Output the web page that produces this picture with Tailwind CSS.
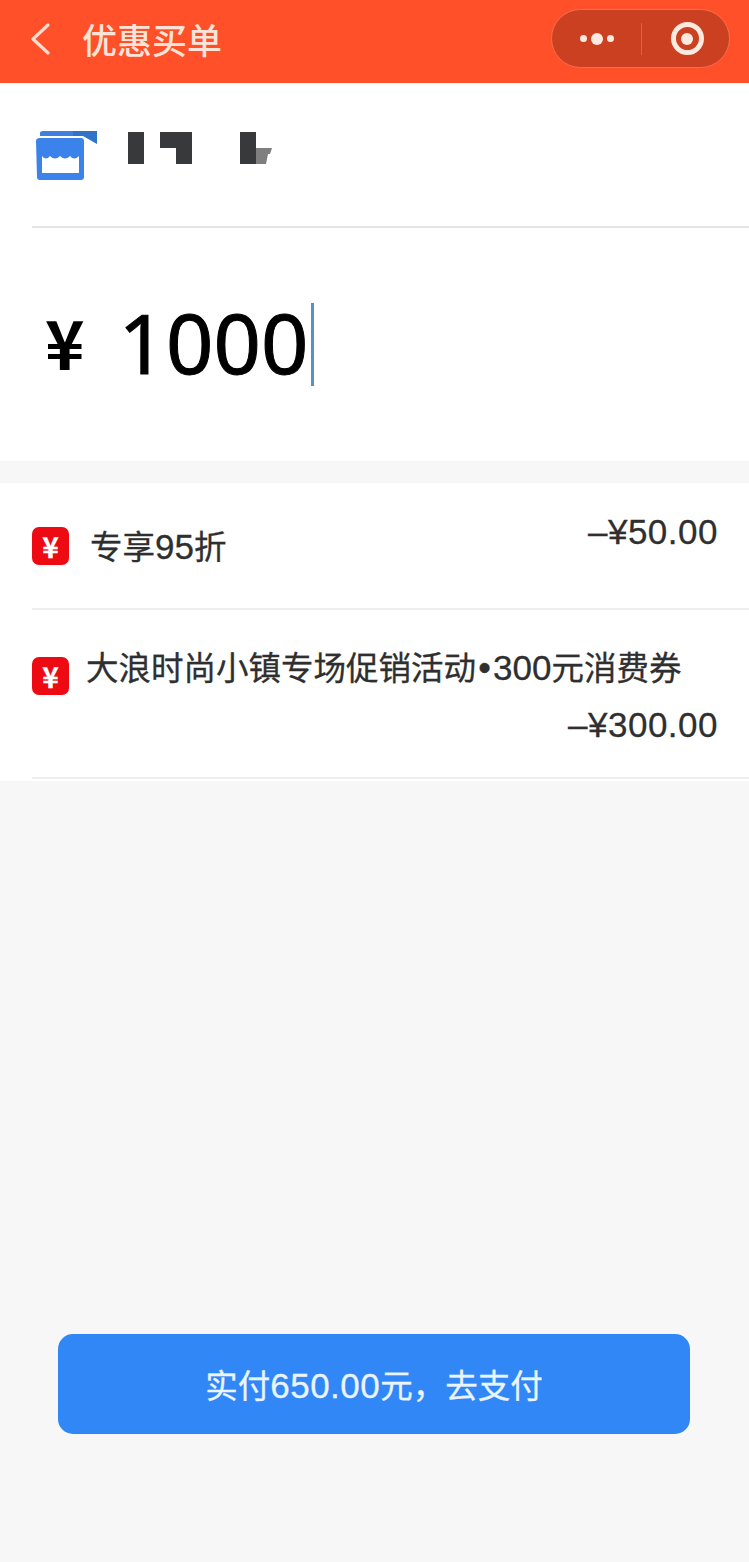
<!doctype html>
<html lang="zh-CN">
<head>
<meta charset="UTF-8">
<script src="https://cdn.jsdelivr.net/npm/@tailwindcss/browser@4"></script>
<title>优惠买单</title>
</head>
<body class="bg-[#f7f7f7] font-['Liberation_Sans','Noto_Sans_CJK_SC',sans-serif]">
<div class="w-[749px] h-[1562px] flex flex-col overflow-hidden">
  <!-- Header -->
  <header class="h-[83px] bg-[#ff5029] flex items-center pl-[31px] pr-[19px] pb-[6px] shrink-0">
    <svg class="w-[19px] h-[32px]" viewBox="0 0 19 32" fill="none" stroke="#fbdccf" stroke-width="3.2" stroke-linecap="round" stroke-linejoin="round"><path d="M17 2 L2 16 L17 30"/></svg>
    <h1 class="ml-[32px] text-[35px] leading-[44px] text-[#fbe3d8] font-medium font-['Noto_Sans_CJK_SC',sans-serif]">优惠买单</h1>
    <div class="ml-auto w-[179px] h-[59px] rounded-full bg-[#cb4021] border border-[#f4704f] flex items-center">
      <div class="w-[89px] flex items-center justify-center gap-[4px]">
        <span class="w-[7px] h-[7px] rounded-full bg-[#fde9df]"></span>
        <span class="w-[12px] h-[12px] rounded-full bg-[#fde9df]"></span>
        <span class="w-[7px] h-[7px] rounded-full bg-[#fde9df]"></span>
      </div>
      <div class="w-px h-[32px] bg-[#dc6243]"></div>
      <div class="flex-1 flex items-center justify-center pl-[3px]">
        <div class="w-[33px] h-[33px] rounded-full border-[5px] border-[#fdeadf] flex items-center justify-center">
          <span class="w-[12px] h-[12px] rounded-full bg-[#fdeadf]"></span>
        </div>
      </div>
    </div>
  </header>

  <!-- Shop and amount -->
  <section class="bg-white h-[378px] pl-[32px] shrink-0 flex flex-col">
    <div class="h-[145px] border-b-2 border-[#e4e4e4] flex items-start shrink-0">
      <svg class="mt-[47px] ml-[3px] w-[62px] h-[52px]" viewBox="0 0 62 52">
        <path d="M5 3 Q5 1 8 1 H38 V6 H5 Z" fill="#3f7fe0"/>
        <path d="M38 1 H62 V14 L48 6 H38 Z" fill="#2f74c9"/>
        <path d="M1 11 Q1 8 5 8 H46 Q49 8 49 11 V47 Q49 50 46 50 H5 Q2 50 2 47 Z" fill="#3b82ea"/>
        <path d="M7 29 V26 Q11 31 15 26 Q20 31 25 26 Q30 31 35 26 Q39 31 44 26 V43 H7 Z" fill="#fff"/>
      </svg>
      <svg class="mt-[49px] ml-[31px] w-[144px] h-[32px]" viewBox="0 0 144 32">
        <path d="M0 0 H16 V32 H0 Z M32 0 H64 V32 H48 V16 H32 Z M112 0 H128 V32 H112 Z" fill="#38393b"/>
        <path d="M128 16 H144 L142 22 H140 L138 32 H128 Z" fill="#7f7f7f"/>
      </svg>
    </div>
    <div class="flex items-center flex-1 text-black">
      <span class="ml-[13px] mb-[8px] text-[67px] leading-none font-['Noto_Sans_CJK_SC',sans-serif] font-bold">¥</span>
      <span class="ml-[34px] mb-[6px] text-[83px] leading-none font-['Noto_Sans',sans-serif] [-webkit-text-stroke:1px]">1000</span>
      <span class="ml-[3px] w-[3px] h-[83px] bg-[#5a8fc8]"></span>
    </div>
  </section>

  <!-- Discounts -->
  <section class="mt-[22px] bg-white h-[298px] pl-[32px] shrink-0 text-[#2f2f2f] [-webkit-text-stroke:0.3px]">
    <div class="h-[127px] border-b-2 border-[#eeeeee] flex items-start pr-[31px]">
      <span class="mt-[44px] w-[37px] h-[38px] rounded-[7px] bg-[#ee0a12] flex items-center justify-center text-white text-[28px] font-bold leading-none font-['Noto_Sans_CJK_SC',sans-serif]">¥</span>
      <span class="mt-[42px] ml-[21px] text-[32.5px] leading-[44px]">专享<span class="text-[35px]">95</span>折</span>
      <span class="ml-auto mt-[27px] text-[35px] leading-[44px] tracking-[0.5px]">–¥50.00</span>
    </div>
    <div class="h-[169px] border-b-2 border-[#eeeeee] pr-[31px]">
      <div class="flex items-start">
        <span class="mt-[47px] w-[37px] h-[38px] rounded-[7px] bg-[#ee0a12] flex items-center justify-center text-white text-[28px] font-bold leading-none font-['Noto_Sans_CJK_SC',sans-serif]">¥</span>
        <span class="mt-[36px] ml-[17px] text-[32.5px] leading-[44px] whitespace-nowrap">大浪时尚小镇专场促销活动<span class="inline-block w-[17px] text-center text-[36px] leading-none">•</span><span class="text-[35px]">300</span>元消费券</span>
      </div>
      <div class="text-right text-[35px] leading-[44px] tracking-[0.5px] mt-[8px]">–¥300.00</div>
    </div>
  </section>

  <!-- Pay button -->
  <div class="mt-[553px] pl-[58px] pr-[59px]">
    <button class="w-full h-[100px] pt-[3px] rounded-[15px] bg-[#3287f6] text-[#eaf4fc] text-[32.5px] leading-none [-webkit-text-stroke:0.3px]">实付<span class="text-[35px] tracking-[0.5px]">650.00</span>元，去支付</button>
  </div>
</div>
</body>
</html>
